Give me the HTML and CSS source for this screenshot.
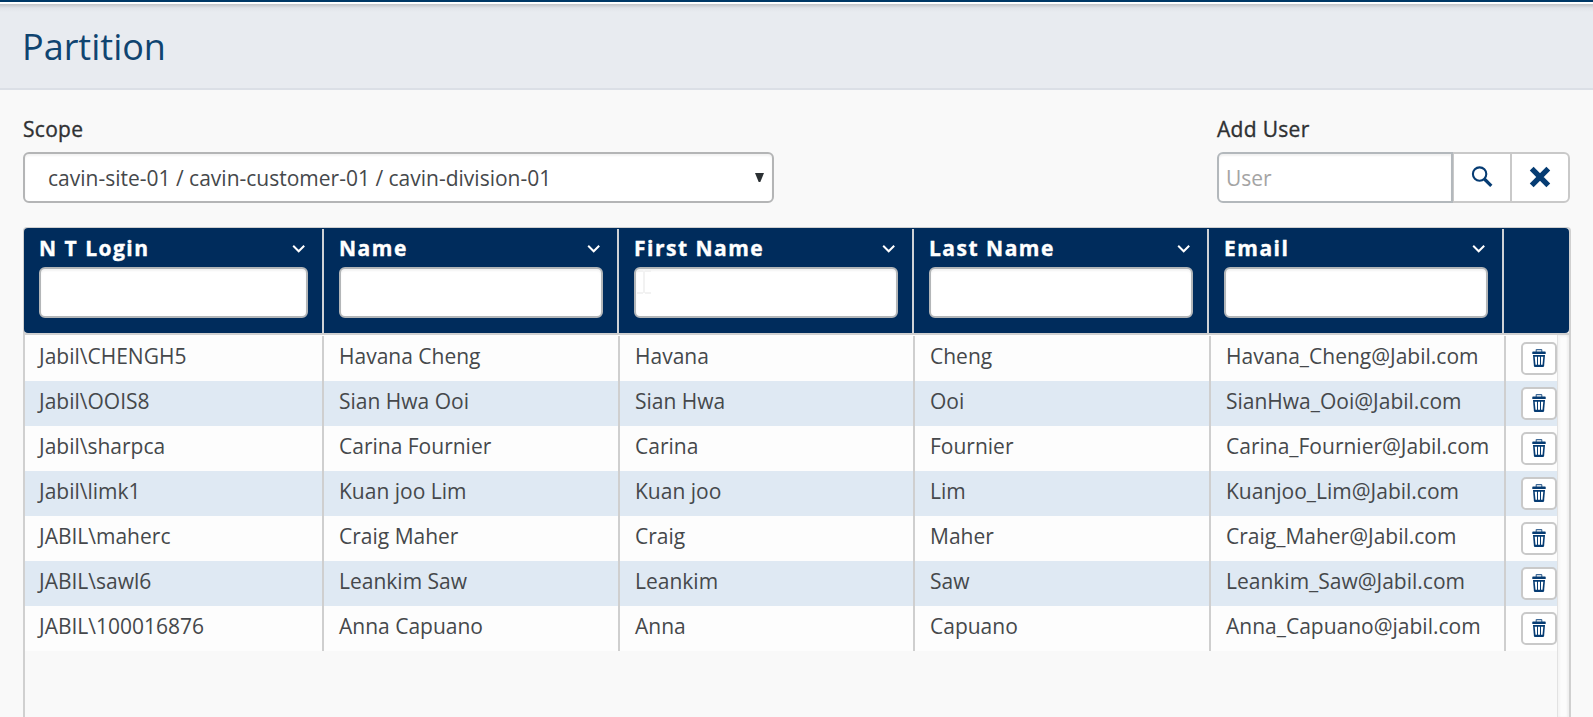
FILE: index.html
```
<!DOCTYPE html>
<html lang="en">
<head>
<meta charset="utf-8">
<title>Partition</title>
<link rel="stylesheet" href="styles.css">
</head>
<body>
<svg width="0" height="0" class="defs">
  <symbol id="chev" viewBox="0 0 14 9"><path d="M1.2 1.8 L6.7 7.3 L12.2 1.8" fill="none" stroke="#fff" stroke-width="2"/></symbol>
  <symbol id="trash" viewBox="0 0 14 18">
    <path d="M4.2 3 V1.2 Q4.2 .6 4.8 .6 H9.2 Q9.8 .6 9.8 1.2 V3" fill="none" stroke="#3c6896" stroke-width="1.1"/>
    <path d="M.3 3 Q.3 2.5 1 2.5 H13 Q13.7 2.5 13.7 3 V5 H.3 Z" fill="#063c73"/>
    <path d="M1 6 H13 L12.1 17 Q12 18 11 18 H3 Q2 18 1.9 17 Z" fill="#063c73"/>
    <path d="M2.7 7.7 H5 V15.8 H3.5 Z M6 7.7 H8 V15.8 H6 Z M9 7.7 H11.3 L10.5 15.8 H9 Z" fill="#fff"/>
  </symbol>
</svg>
<div class="topbar"></div>
<header class="page-head"><h1>Partition</h1></header>
<main class="content">
  <div class="controls">
    <div class="scope">
      <label class="label">Scope</label>
      <div class="select"><span>cavin-site-01 / cavin-customer-01 / cavin-division-01</span>
        <svg class="caret" width="9" height="9" viewBox="0 0 9 9"><path d="M0 0H9L5.3 9H3.7Z" fill="#2b3033"/></svg></div>
    </div>
    <div class="add">
      <label class="label">Add User</label>
      <div class="group">
        <input class="user" type="text" placeholder="User">
        <button class="btn" aria-label="Search"><svg width="22" height="22" viewBox="0 0 22 22"><circle cx="8.6" cy="8.1" r="6.7" fill="none" stroke="#063c73" stroke-width="2.1"/><path d="M13.4 13 L20.3 19.9" stroke="#063c73" stroke-width="3.2"/></svg></button>
        <button class="btn last" aria-label="Clear"><svg width="22" height="22" viewBox="0 0 22 22"><path d="M2.7 2.7 L19.3 19.3 M19.3 2.7 L2.7 19.3" stroke="#063c73" stroke-width="5.4"/></svg></button>
      </div>
    </div>
  </div>
  <div class="grid">
    <div class="grid-head">
      <div class="th"><div class="th-top"><span>N T Login</span><svg class="chev"><use href="#chev"/></svg></div><div class="filter"></div></div>
      <div class="th"><div class="th-top"><span>Name</span><svg class="chev"><use href="#chev"/></svg></div><div class="filter"></div></div>
      <div class="th"><div class="th-top"><span>First Name</span><svg class="chev"><use href="#chev"/></svg></div><div class="filter"><svg class="ibeam" width="14" height="24" viewBox="0 0 14 24"><path d="M0 1H6M8 1H14M7 1V23M0 23H6M8 23H14" stroke="#f2f2f2" stroke-width="2" fill="none"/></svg></div></div>
      <div class="th"><div class="th-top"><span>Last Name</span><svg class="chev"><use href="#chev"/></svg></div><div class="filter"></div></div>
      <div class="th"><div class="th-top"><span>Email</span><svg class="chev"><use href="#chev"/></svg></div><div class="filter"></div></div>
      <div class="th end"></div>
    </div>
    <div class="grid-body">
      <div class="rows">
        <div class="row"><div>Jabil\CHENGH5</div><div>Havana Cheng</div><div>Havana</div><div>Cheng</div><div>Havana_Cheng@Jabil.com</div><div class="act"><button class="del" aria-label="Delete"><svg class="trash"><use href="#trash"/></svg></button></div></div>
        <div class="row"><div>Jabil\OOIS8</div><div>Sian Hwa Ooi</div><div>Sian Hwa</div><div>Ooi</div><div>SianHwa_Ooi@Jabil.com</div><div class="act"><button class="del" aria-label="Delete"><svg class="trash"><use href="#trash"/></svg></button></div></div>
        <div class="row"><div>Jabil\sharpca</div><div>Carina Fournier</div><div>Carina</div><div>Fournier</div><div>Carina_Fournier@Jabil.com</div><div class="act"><button class="del" aria-label="Delete"><svg class="trash"><use href="#trash"/></svg></button></div></div>
        <div class="row"><div>Jabil\limk1</div><div>Kuan joo Lim</div><div>Kuan joo</div><div>Lim</div><div>Kuanjoo_Lim@Jabil.com</div><div class="act"><button class="del" aria-label="Delete"><svg class="trash"><use href="#trash"/></svg></button></div></div>
        <div class="row"><div>JABIL\maherc</div><div>Craig Maher</div><div>Craig</div><div>Maher</div><div>Craig_Maher@Jabil.com</div><div class="act"><button class="del" aria-label="Delete"><svg class="trash"><use href="#trash"/></svg></button></div></div>
        <div class="row"><div>JABIL\sawl6</div><div>Leankim Saw</div><div>Leankim</div><div>Saw</div><div>Leankim_Saw@Jabil.com</div><div class="act"><button class="del" aria-label="Delete"><svg class="trash"><use href="#trash"/></svg></button></div></div>
        <div class="row"><div>JABIL\100016876</div><div>Anna Capuano</div><div>Anna</div><div>Capuano</div><div>Anna_Capuano@jabil.com</div><div class="act"><button class="del" aria-label="Delete"><svg class="trash"><use href="#trash"/></svg></button></div></div>
      </div>
      <div class="scroll"></div>
    </div>
  </div>
</main>
</body>
</html>
```
FILE: styles.css
```
* { box-sizing: border-box; }
html, body { height: 100%; overflow: hidden; }
body {
  margin: 0;
  display: flex;
  flex-direction: column;
  background: #f9f9f9;
  color: #45484b;
  font-family: "Open Sans", "Noto Sans", sans-serif;
  font-size: 21px;
}
.defs { position: absolute; }
.topbar { flex: none; height: 4px; background: #fff; border-top: 2px solid #003866; }
.page-head {
  flex: none;
  height: 86px;
  padding-left: 22px;
  border-bottom: 2px solid #dbdfe6;
  background: linear-gradient(#c4c5c8 0, #d2d4d8 2px, #e2e4e9 4px, #e8ebf0 8px);
}
h1 { margin: 0; padding-top: 18px; font-size: 36px; line-height: 50px; font-weight: 400; color: #0f4470; }
.content { flex: 1; min-height: 0; display: flex; flex-direction: column; padding: 24px 22px 0 23px; }
.controls { display: flex; justify-content: space-between; height: 113px; padding-right: 1px; }
.label { display: block; height: 38px; line-height: 31px; font-weight: 400; letter-spacing: .3px; -webkit-text-stroke: .35px #2f3133; color: #2f3133; }
.select {
  display: flex; align-items: center; justify-content: space-between;
  width: 751px; height: 51px; padding: 0 8px 0 23px;
  border: 2px solid #b4b5b6; border-radius: 6px; background: #fff;
  box-shadow: inset 0 2px 2px rgba(0,0,0,.05);
  font-weight: 400;
}
.group { display: flex; height: 51px; width: 353px; }
.user {
  width: 236px; padding: 0 7px; border: 2px solid #b3b8bc; border-radius: 6px 0 0 6px;
  font: 400 21px "Open Sans", sans-serif; background: #fff;
  box-shadow: inset 0 2px 2px rgba(0,0,0,.06);
}
.user::placeholder { color: #a4a4a4; opacity: 1; }
.btn { width: 57px; padding: 0 0 2px; border: 2px solid #c9c9c9; border-left-width: 1px; border-right: 0; background: #fff; display: flex; align-items: center; justify-content: center; }
.btn.last { width: 60px; border-left-width: 2px; border-right: 2px solid #c9c9c9; border-radius: 0 6px 6px 0; }
.grid { flex: 1; min-height: 0; display: flex; flex-direction: column; border: 2px solid #d0d0d0; border-top-width: 1px; border-bottom: 0; border-radius: 4px 4px 0 0; }
.grid-head {
  flex: none; display: grid; grid-template-columns: 300px 295px 295px 295px 295px 1fr;
  height: 105px; margin: 0 0 0 -1px; padding-top: 1px;
  background: #002c5c; border-radius: 4px;
}
.th { border-right: 2px solid #cfd2d6; padding: 4px 14px 0 15px; }
.th.end { border-right: 0; }
.th-top { display: flex; align-items: center; justify-content: space-between; height: 30px; padding-right: 2px; margin-bottom: 4px; color: #fff; font-weight: 700; letter-spacing: 1.5px; -webkit-text-stroke: .4px #fff; }
.chev { width: 14px; height: 9px; }
.filter { height: 51px; border: 2px solid #b3b6b8; border-radius: 6px; background: #fff; box-shadow: inset 0 2px 2px rgba(0,0,0,.05); padding: 1px; }
.ibeam { display: block; }
.grid-body { flex: 1; min-height: 0; display: flex; border-top: 2px solid #d0d0d0; }
.rows { flex: 1; padding-top: 1px; background: linear-gradient(#fdfdfd 1px, transparent 1px); }
.row { display: grid; grid-template-columns: 299px 296px 295px 296px 295px 1fr; height: 45px; background: #fdfdfd; font-weight: 400; line-height: 40px; white-space: nowrap; }
.row:nth-child(even) { background: #dfe9f3; }
.row > div { border-right: 2px solid #cfcfcf; padding-left: 15px; }
.row > div:first-child { padding-left: 14px; }
.row > .act { border-right: 0; padding: 6px 0 0 15px; }
.del { display: flex; align-items: center; justify-content: center; width: 36px; height: 33px; padding: 0 0 2px; border: 2px solid #c9c9c9; border-radius: 5px; background: #fff; }
.trash { width: 14px; height: 18px; }
.scroll { width: 12px; background: #fcfcfc; border-left: 1px solid #e2e2e2; box-shadow: inset 2px 2px 2px rgba(0,0,0,.03), inset -2px 0 2px rgba(0,0,0,.05); }
```
